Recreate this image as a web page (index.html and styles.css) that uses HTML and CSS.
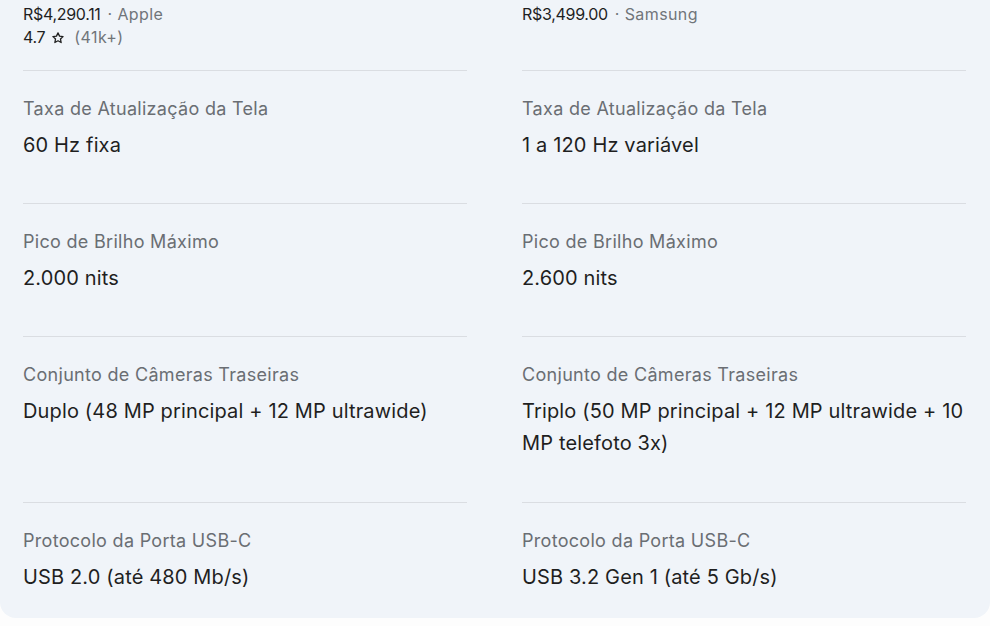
FILE: index.html
```html
<!DOCTYPE html>
<html lang="pt-BR">
<head>
<meta charset="utf-8">
<title>Comparação</title>
<link rel="stylesheet" href="styles.css">
</head>
<body>
<div class="card">
  <div class="grid">
    <div class="head">
      <div class="price-line"><span class="price">R$4,290.11</span><span class="seller"> · Apple</span></div>
      <div class="rating-line"><span class="price">4.7</span><svg class="star" viewBox="0 0 24 24" width="14" height="14"><path d="M12 3.2l2.6 5.6 6.1.7-4.5 4.2 1.2 6.1L12 16.8l-5.4 3 1.2-6.1-4.5-4.2 6.1-.7z" fill="none" stroke="#1f1f1f" stroke-width="2.2" stroke-linejoin="round"/></svg><span class="seller">(41k+)</span></div>
    </div>
    <div class="head">
      <div class="price-line"><span class="price">R$3,499.00</span><span class="seller"> · Samsung</span></div>
    </div>

    <div class="cell">
      <div class="label">Taxa de Atualização da Tela</div>
      <div class="value">60 Hz fixa</div>
    </div>
    <div class="cell">
      <div class="label">Taxa de Atualização da Tela</div>
      <div class="value">1 a 120 Hz variável</div>
    </div>

    <div class="cell">
      <div class="label">Pico de Brilho Máximo</div>
      <div class="value">2.000 nits</div>
    </div>
    <div class="cell">
      <div class="label">Pico de Brilho Máximo</div>
      <div class="value">2.600 nits</div>
    </div>

    <div class="cell">
      <div class="label">Conjunto de Câmeras Traseiras</div>
      <div class="value">Duplo (48 MP principal + 12 MP ultrawide)</div>
    </div>
    <div class="cell">
      <div class="label">Conjunto de Câmeras Traseiras</div>
      <div class="value">Triplo (50 MP principal + 12 MP ultrawide + 10 MP telefoto 3x)</div>
    </div>

    <div class="cell last">
      <div class="label">Protocolo da Porta USB-C</div>
      <div class="value">USB 2.0 (até 480 Mb/s)</div>
    </div>
    <div class="cell last">
      <div class="label">Protocolo da Porta USB-C</div>
      <div class="value">USB 3.2 Gen 1 (até 5 Gb/s)</div>
    </div>
  </div>
</div>
</body>
</html>
```

FILE: styles.css
```css
html, body {
  margin: 0;
  padding: 0;
  background: #fdfdfd;
  font-family: Inter, Roboto, "Noto Sans", sans-serif;
  color: #1f1f1f;
}

.card {
  background: #f0f4f9;
  border-radius: 0 0 16px 16px;
  padding: 3px 24px 0 23px;
  height: 615px;
}

.grid {
  display: grid;
  grid-template-columns: 444px 444px;
  column-gap: 55px;
}

.head {
  height: 67px;
  font-size: 16px;
  line-height: 23px;
}

.price {
  color: #1f1f1f;
  letter-spacing: -0.3px;
}

.seller {
  color: #70757a;
  letter-spacing: 0.4px;
}

.price-line .seller {
  margin-left: 2px;
}

.rating-line {
  display: flex;
  align-items: center;
}

.star {
  margin: 0 9px 0 6px;
}

.cell {
  border-top: 1px solid #dadde2;
  padding: 26px 0 42px;
}

.cell:nth-child(7), .cell:nth-child(8) {
  padding-bottom: 43px;
}

.cell.last {
  padding-bottom: 26px;
}

.label {
  font-size: 18px;
  line-height: 24px;
  color: #6a6e73;
  letter-spacing: 0.3px;
}

.value {
  margin-top: 8px;
  font-size: 20px;
  line-height: 32px;
  color: #1f1f1f;
  letter-spacing: 0.15px;
}
```
